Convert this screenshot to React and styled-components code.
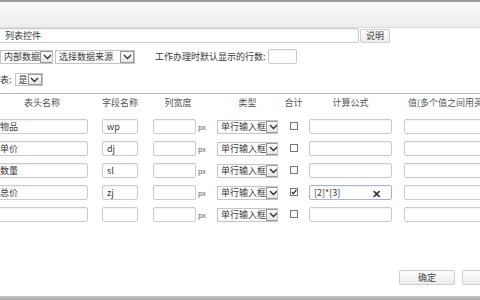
import React from 'react';
import styled, { createGlobalStyle } from 'styled-components';

const Global = createGlobalStyle`
  html, body { margin: 0; padding: 0; background: #fff; overflow: hidden; }
  body { font-family: "Noto Sans CJK SC", "Noto Sans", sans-serif; font-size: 9px; color: #3a3a3a; }
`;

const Frame = styled.div`
  width: 480px;
  height: 300px;
  display: flex;
  flex-direction: column;
  overflow: hidden;
`;

const TopBar = styled.div`
  height: 25px;
  border-top: 2px solid #9c9c9c;
  background: linear-gradient(#fafafa, #ececec);
  border-bottom: 1px solid #dcdcdc;
  flex: none;
`;

const Body = styled.div`
  flex: 1;
  display: flex;
  flex-direction: column;
`;

const Row = styled.div`
  display: flex;
  align-items: center;
  height: ${(p) => p.h || 15}px;
  margin-top: ${(p) => p.mt || 0}px;
  margin-left: ${(p) => p.ml || 0}px;
  gap: ${(p) => p.gap || 0}px;
`;

const TextBox = styled.div`
  box-sizing: border-box;
  width: ${(p) => p.w}px;
  height: ${(p) => p.h || 15}px;
  border: 1px solid ${(p) => (p.focus ? '#9fb8d6' : '#cbcbcb')};
  border-radius: 2px;
  box-shadow: inset 0 1px 1px rgba(0, 0, 0, 0.06);
  background: #fff;
  display: flex;
  align-items: center;
  padding: 0 ${(p) => p.pl || 4}px;
  color: #3a3a3a;
  white-space: nowrap;
  overflow: hidden;
  flex: none;
`;

const Clear = styled.span`
  margin-left: auto;
  font-size: 11px;
  font-weight: bold;
  color: #333;
  margin-right: 6px;
`;

const Button = styled.div`
  box-sizing: border-box;
  width: ${(p) => p.w}px;
  height: ${(p) => p.h || 14}px;
  border: 1px solid #cfcfcf;
  border-radius: 2px;
  background: linear-gradient(#fdfdfd, #ececec);
  display: flex;
  align-items: center;
  justify-content: center;
  color: #444;
  flex: none;
`;

const SelectBox = styled.div`
  box-sizing: border-box;
  width: ${(p) => p.w}px;
  height: ${(p) => p.h || 14}px;
  border: 1px solid #c4c4c4;
  background: #fff;
  display: flex;
  align-items: center;
  padding-left: 3px;
  white-space: nowrap;
  overflow: hidden;
  flex: none;
`;

const Arrow = styled.div`
  margin-left: auto;
  box-sizing: border-box;
  width: 14px;
  height: 100%;
  border: 1px solid #9a9a9a;
  background: linear-gradient(#fdfdfd, #e6e6e6);
  display: flex;
  align-items: center;
  justify-content: center;
  flex: none;
`;

const Label = styled.span`
  color: #3a3a3a;
  white-space: nowrap;
  margin-left: ${(p) => p.ml || 0}px;
`;

const Divider = styled.div`
  height: 1px;
  background: #b8b8b8;
  margin-top: 7px;
`;

const Grid = styled.div`
  display: grid;
  grid-template-columns: 92px 14px 36px 15px 43px 21px 61px 31px 83px 12px 96px;
  align-items: center;
  margin-left: -4px;
  height: ${(p) => p.h || 15}px;
  margin-top: ${(p) => p.mt || 0}px;
`;

const Head = styled.div`
  grid-column: ${(p) => p.col};
  text-align: ${(p) => p.align || 'center'};
  color: #555;
  white-space: nowrap;
  padding-left: ${(p) => p.pl || 0}px;
  padding-right: ${(p) => p.pr || 0}px;
`;

const Cell = styled.div`
  grid-column: ${(p) => p.col};
  display: flex;
  align-items: center;
  justify-content: ${(p) => p.justify || 'flex-start'};
`;

const Px = styled.span`
  color: #555;
  font-size: 7px;
  padding-left: 2px;
`;

const Check = styled.div`
  box-sizing: border-box;
  width: 8px;
  height: 8px;
  border: 1px solid #777;
  background: #fff;
  display: flex;
  align-items: center;
  justify-content: center;
  margin-top: -2px;
`;

const Spacer = styled.div`
  flex: 1;
`;

const Footer = styled.div`
  display: flex;
  justify-content: flex-end;
  gap: 7px;
  margin-right: -38px;
  margin-bottom: 11px;
`;

const BottomBar = styled.div`
  height: 4px;
  background: linear-gradient(#c8c8c8, #a8a8a8);
  flex: none;
`;

const Chevron = () => (
  <svg width="9" height="6" viewBox="0 0 9 6">
    <path d="M1 1 L4.5 4.5 L8 1" fill="none" stroke="#333" strokeWidth="1.4" />
  </svg>
);

const Select = ({ w, h, children }) => (
  <SelectBox w={w} h={h}>
    <span>{children}</span>
    <Arrow>
      <Chevron />
    </Arrow>
  </SelectBox>
);

const rows = [
  { name: '物品', field: 'wp', sum: false, formula: '' },
  { name: '单价', field: 'dj', sum: false, formula: '' },
  { name: '数量', field: 'sl', sum: false, formula: '' },
  { name: '总价', field: 'zj', sum: true, formula: '[2]*[3]' },
  { name: '', field: '', sum: false, formula: '' },
];

export default function App() {
  return (
    <Frame>
      <Global />
      <TopBar />
      <Body>
        <Row ml={-3} gap={1}>
          <TextBox w={362} pl={7}>列表控件</TextBox>
          <Button w={30}>说明</Button>
        </Row>
        <Row mt={6} gap={2}>
          <Select w={53}>内部数据</Select>
          <Select w={80}>选择数据来源</Select>
          <Label ml={18}>工作办理时默认显示的行数:</Label>
          <TextBox w={29} />
        </Row>
        <Row mt={9} h={13} gap={3}>
          <Label>表:</Label>
          <Select w={28} h={13}>是</Select>
        </Row>
        <Divider />
        <Grid mt={1} h={14}>
          <Head col={1}>表头名称</Head>
          <Head col={3}>字段名称</Head>
          <Head col="5 / 7" pr={14}>列宽度</Head>
          <Head col={7}>类型</Head>
          <Head col={8}>合计</Head>
          <Head col={9}>计算公式</Head>
          <Head col={11} align="left" pl={4}>值(多个值之间用英文逗号隔开)</Head>
        </Grid>
        {rows.map((r, i) => (
          <Grid key={i} mt={i === 0 ? 10 : 7} h={15}>
            <Cell col={1}>
              <TextBox w={92} pl={3}>{r.name}</TextBox>
            </Cell>
            <Cell col={3}>
              <TextBox w={36}>{r.field}</TextBox>
            </Cell>
            <Cell col={5}>
              <TextBox w={43} />
            </Cell>
            <Cell col={6}>
              <Px>px</Px>
            </Cell>
            <Cell col={7}>
              <Select w={61}>单行输入框</Select>
            </Cell>
            <Cell col={8} justify="center">
              <Check>
                {r.sum && (
                  <svg width="6" height="6" viewBox="0 0 6 6">
                    <path d="M0.8 3 L2.4 4.8 L5.4 0.8" fill="none" stroke="#222" strokeWidth="1.2" />
                  </svg>
                )}
              </Check>
            </Cell>
            <Cell col={9}>
              <TextBox w={83} focus={r.sum}>
                {r.formula}
                {r.sum && <Clear>✕</Clear>}
              </TextBox>
            </Cell>
            <Cell col={11}>
              <TextBox w={96} />
            </Cell>
          </Grid>
        ))}
        <Spacer />
        <Footer>
          <Button w={56} h={15}>确定</Button>
          <Button w={56} h={15} />
        </Footer>
      </Body>
      <BottomBar />
    </Frame>
  );
}
